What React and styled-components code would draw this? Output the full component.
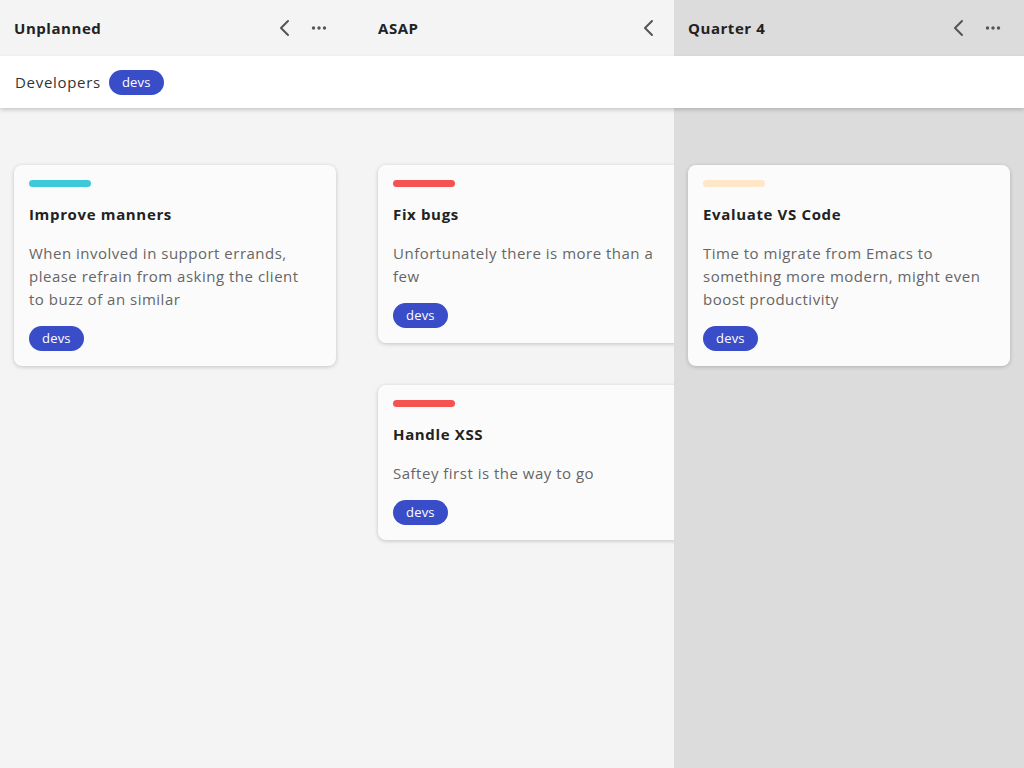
import React from "react";
import styled, { createGlobalStyle } from "styled-components";

const GlobalStyle = createGlobalStyle`
  * { box-sizing: border-box; }
  html, body { margin: 0; padding: 0; height: 100%; }
  body {
    font-family: "Open Sans", "Noto Sans", sans-serif;
    background: #f4f4f4;
    color: #222;
    overflow: hidden;
  }
  #root { height: 100%; }
`;

const Board = styled.div`
  display: flex;
  flex-direction: column;
  height: 768px;
  width: 1024px;
  overflow: hidden;
`;

const Row = styled.div`
  display: grid;
  grid-template-columns: 364px 310px 350px;
`;

const BodyRow = styled(Row)`
  flex: 1;
`;

const ColumnHeader = styled.div`
  height: 56px;
  display: flex;
  align-items: center;
  padding: 0 14px;
  background: ${(p) => (p.$active ? "#dcdcdc" : "#f4f4f4")};
  overflow: hidden;
`;

const HeaderInner = styled.div`
  width: 322px;
  flex: none;
  display: flex;
  align-items: center;
`;

const ColumnTitle = styled.h2`
  margin: 0;
  flex: 1;
  font-size: 15px;
  font-weight: 700;
  letter-spacing: 0.55px;
  color: #222;
`;

const IconButton = styled.button`
  border: 0;
  background: none;
  padding: 0;
  width: 34px;
  height: 24px;
  display: flex;
  align-items: center;
  justify-content: center;
  color: #555;
  cursor: pointer;
`;

const Swimlane = styled.div`
  height: 52px;
  background: #fff;
  display: flex;
  align-items: center;
  gap: 8px;
  padding: 0 15px;
  box-shadow: 0 2px 4px rgba(0, 0, 0, 0.18);
  position: relative;
  z-index: 1;
`;

const SwimlaneName = styled.span`
  font-size: 15px;
  letter-spacing: 0.7px;
  color: #333;
`;

const Tag = styled.span`
  display: inline-flex;
  align-items: center;
  justify-content: center;
  height: 25px;
  padding: 0 13px;
  border-radius: 13px;
  background: #3a4dc8;
  color: #fff;
  font-size: 13px;
  line-height: 1;
  letter-spacing: 0.2px;
  align-self: ${(p) => (p.$start ? "flex-start" : "auto")};
`;

const Column = styled.div`
  background: ${(p) => (p.$active ? "#dcdcdc" : "#f4f4f4")};
  padding: 57px 14px 14px;
  display: flex;
  flex-direction: column;
  gap: 42px;
  overflow: hidden;
`;

const Card = styled.div`
  width: 322px;
  flex: none;
  background: #fbfbfb;
  border-radius: 8px;
  box-shadow: 0 1px 4px rgba(0, 0, 0, 0.2);
  padding: 15px;
  display: flex;
  flex-direction: column;
`;

const ColorBar = styled.div`
  width: 62px;
  height: 7px;
  border-radius: 4px;
  background: ${(p) => p.$color};
`;

const CardTitle = styled.h3`
  margin: 16px 0 0;
  font-size: 15px;
  line-height: 22px;
  font-weight: 700;
  letter-spacing: 0.65px;
  color: #222;
`;

const CardText = styled.p`
  margin: 17px 0 15px;
  padding-right: 7px;
  font-size: 15px;
  line-height: 23px;
  letter-spacing: 0.5px;
  color: #666;
`;

const Chevron = () => (
  <svg width="16" height="18" viewBox="0 0 16 18" fill="none">
    <path d="M11 2 L4 9 L11 16" stroke="currentColor" strokeWidth="2" strokeLinecap="round" strokeLinejoin="round" />
  </svg>
);

const Dots = () => (
  <svg width="16" height="6" viewBox="0 0 16 6" fill="currentColor">
    <circle cx="2.5" cy="3" r="1.7" />
    <circle cx="8" cy="3" r="1.7" />
    <circle cx="13.5" cy="3" r="1.7" />
  </svg>
);

const columns = [
  {
    title: "Unplanned",
    dots: true,
    cards: [
      {
        color: "#3ec9da",
        title: "Improve manners",
        text: "When involved in support errands, please refrain from asking the client to buzz of an similar",
      },
    ],
  },
  {
    title: "ASAP",
    dots: false,
    cards: [
      { color: "#f55252", title: "Fix bugs", text: "Unfortunately there is more than a few" },
      { color: "#f55252", title: "Handle XSS", text: "Saftey first is the way to go" },
    ],
  },
  {
    title: "Quarter 4",
    dots: true,
    active: true,
    cards: [
      {
        color: "#ffe6c9",
        title: "Evaluate VS Code",
        text: "Time to migrate from Emacs to something more modern, might even boost productivity",
      },
    ],
  },
];

export default function App() {
  return (
    <Board>
      <GlobalStyle />
      <Row>
        {columns.map((c) => (
          <ColumnHeader key={c.title} $active={c.active}>
            <HeaderInner>
              <ColumnTitle>{c.title}</ColumnTitle>
              <IconButton aria-label="Collapse"><Chevron /></IconButton>
              {c.dots ? <IconButton aria-label="More"><Dots /></IconButton> : <IconButton as="span" />}
            </HeaderInner>
          </ColumnHeader>
        ))}
      </Row>
      <Swimlane>
        <SwimlaneName>Developers</SwimlaneName>
        <Tag>devs</Tag>
      </Swimlane>
      <BodyRow>
        {columns.map((c) => (
          <Column key={c.title} $active={c.active}>
            {c.cards.map((card) => (
              <Card key={card.title}>
                <ColorBar $color={card.color} />
                <CardTitle>{card.title}</CardTitle>
                <CardText>{card.text}</CardText>
                <Tag $start>devs</Tag>
              </Card>
            ))}
          </Column>
        ))}
      </BodyRow>
    </Board>
  );
}
